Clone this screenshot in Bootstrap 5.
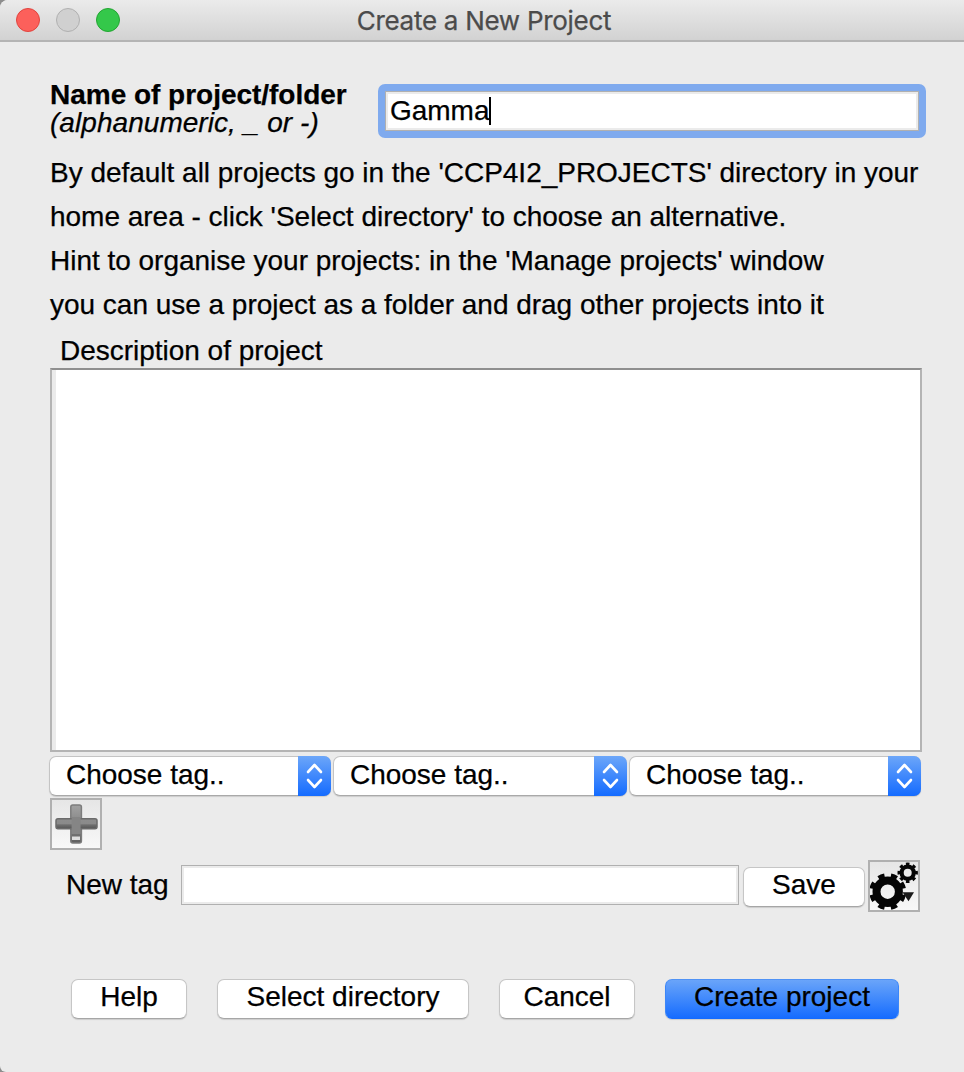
<!DOCTYPE html>
<html lang="en">
<head>
<meta charset="utf-8">
<title>Create a New Project</title>
<link href="https://cdn.jsdelivr.net/npm/bootstrap@5.3.0/dist/css/bootstrap.min.css" rel="stylesheet">
<style>
body{background:#8d8d8d;font:28px/28px "Liberation Sans",Arial,sans-serif;color:#000;height:1072px;overflow:hidden;letter-spacing:-.02px;-webkit-text-stroke:.25px}
.win{width:964px;height:1072px;background:#ebebeb;border-radius:8px 0 0 6px;overflow:hidden}
.titlebar{height:42px;background:linear-gradient(#ebebeb,#d2d2d2);border-bottom:2px solid #b4b4b4;display:grid;grid-template-columns:200px 1fr 196px}
.lights{padding-left:16px;gap:16px}
.light{width:24px;height:24px;border-radius:50%;border:1px solid}
.l-red{background:#fc605b;border-color:#e0443e}.l-grey{background:#d0d0d0;border-color:#b0b0b0}.l-green{background:#34c84a;border-color:#23a532}
.title-text{font:26px/38px Inter,sans-serif;color:#4b4b4b;letter-spacing:-.28px;white-space:nowrap;padding-top:2px}
.content{padding:38px 38px 0 50px}
.name-label{width:328px;white-space:nowrap;padding-top:1px}
.name-label i{letter-spacing:.05px}
.focus-box{margin-top:4px;height:54px;background:#7faaee;border-radius:7px;padding:7px}
.field{background:#fff;border:1px solid #b0b0b0;box-shadow:inset 0 0 0 2px #ebebeb;height:40px}
.field-name{padding:5px 0 0 4px;line-height:28px}
.caret{width:2px;height:28px;background:#000}
.intro{margin-top:12px;line-height:44px;white-space:nowrap}
.desc-label{height:41px;padding:6px 0 0 10px;line-height:36px}
.desc{width:872px;height:384px;background:#fff;border:2px solid #b4b4b4;border-top-color:#8f8f8f;box-shadow:inset 4px 0 0 #ebebeb}
.tags{margin:4px 0 0 -1px;gap:2px}
.combo{height:40px;background:#fff;border:1px solid #c4c4c4;border-bottom-color:#a9a9a9;border-radius:7px;box-shadow:0 1px 1px #0002;padding-left:16px;line-height:36px}
.combo svg{width:33px;height:40px;margin:-1px -1px 0 0;border-radius:0 7px 7px 0;background:linear-gradient(#6ca6f9,#146bff)}
.tool{width:52px;height:52px;border:2px solid #b0b0b0;background:linear-gradient(#e6e6e6,#f8f8f8)}
.tool svg{display:block;margin:-2px}
.newtag{margin-top:10px;height:52px;padding-left:16px}
.mac{height:40px;padding:0 0 4px;background:#fff;border:1px solid #c6c6c6;border-bottom-color:#a6a6a6;border-radius:7px;box-shadow:0 1px 1px #0002;font-size:28px;line-height:34px;color:#000}
.mac-primary{background:linear-gradient(#6ca6f9,#146bff) border-box;border-color:#4f92f5 #3c86f8 #146bff}
.actions{margin-top:67px;padding-left:21px;gap:30px}
</style>
<script src="https://cdn.jsdelivr.net/npm/bootstrap@5.3.0/dist/js/bootstrap.bundle.min.js"></script>
</head>
<body>
<div class="win">
  <header class="titlebar">
    <div class="lights d-flex align-items-center"><span class="light l-red"></span><span class="light l-grey"></span><span class="light l-green"></span></div>
    <div class="title-text text-center">Create a New Project</div>
  </header>
  <main class="content">
    <div class="d-flex">
      <div class="name-label"><b>Name of project/folder</b><br><i>(alphanumeric, _ or -)</i></div>
      <div class="focus-box flex-grow-1"><div class="field field-name d-flex"><span>Gamma</span><span class="caret"></span></div></div>
    </div>
    <div class="intro" style="padding-top:1px">By default all projects go in the 'CCP4I2_PROJECTS' directory in your<br>home area - click 'Select directory' to choose an alternative.<br>Hint to organise your projects: in the 'Manage projects' window<br>you can use a project as a folder and drag other projects into it</div>
    <div class="desc-label">Description of project</div>
    <div class="desc"></div>
    <div class="tags d-flex">
      <div class="combo d-flex justify-content-between" style="width:282px"><span>Choose tag..</span><svg viewBox="0 0 33 40"><path d="M10 16l6.500-7 6.500 7M10 24l6.500 7 6.500-7" fill="none" stroke="#fff" stroke-width="2.600" stroke-linecap="round" stroke-linejoin="round"/></svg></div>
      <div class="combo d-flex justify-content-between" style="width:294px"><span>Choose tag..</span><svg viewBox="0 0 33 40"><path d="M10 16l6.500-7 6.500 7M10 24l6.500 7 6.500-7" fill="none" stroke="#fff" stroke-width="2.600" stroke-linecap="round" stroke-linejoin="round"/></svg></div>
      <div class="combo d-flex justify-content-between" style="width:292px"><span>Choose tag..</span><svg viewBox="0 0 33 40"><path d="M10 16l6.500-7 6.500 7M10 24l6.500 7 6.500-7" fill="none" stroke="#fff" stroke-width="2.600" stroke-linecap="round" stroke-linejoin="round"/></svg></div>
    </div>
    <div class="tool" style="margin-top:2px">
      <svg width="52" height="52" viewBox="0 0 52 52">
        <defs><linearGradient id="g" x1="0" y1="0" x2="0" y2="1"><stop offset="0" stop-color="#a2a2a2"/><stop offset=".5" stop-color="#858585"/><stop offset="1" stop-color="#5e5e5e"/></linearGradient>
        <linearGradient id="h" x1="0" y1="0" x2="0" y2="1"><stop offset="0" stop-color="#8c8c8c"/><stop offset=".5" stop-color="#8a8a8a"/><stop offset=".6" stop-color="#707070"/><stop offset="1" stop-color="#555"/></linearGradient></defs>
        <rect x="20.800" y="7" width="10.600" height="38" rx="2" fill="url(#g)" stroke="#7c7c7c" stroke-width="1.500"/>
        <rect x="6" y="20.800" width="41" height="10" rx="2" fill="url(#h)" stroke="#6b6b6b" stroke-width="1.500"/>
        <rect x="21.600" y="19" width="9" height="17" fill="#858585"/>
        <rect x="22" y="38.500" width="8" height="3.500" fill="#ddd"/>
      </svg>
    </div>
    <div class="newtag d-flex">
      <span style="width:115px;line-height:50px">New tag</span>
      <div class="field" style="width:558px;margin-top:5px"></div>
      <button class="btn mac" style="width:122px;margin:7px 3px 0 4px">Save</button>
      <div class="tool">
        <svg width="52" height="52" viewBox="0 0 52 52"><clipPath id="c"><path d="M2 2h48v48H2z"/></clipPath><g fill="none" stroke="#050505" clip-path="url(#c)">
          <circle cx="19.700" cy="31.700" r="11.200" stroke-width="8"/>
          <circle cx="19.700" cy="31.700" r="16" stroke-width="5" pathLength="16" stroke-dasharray="1 1" transform="rotate(11.250 19.700 31.700)"/>
          <circle cx="39.700" cy="12.700" r="6.100" stroke-width="4.200"/>
          <circle cx="39.700" cy="12.700" r="8.700" stroke-width="3" pathLength="16" stroke-dasharray="1 1" transform="rotate(-11.250 39.700 12.700)"/>
        </g><path d="M34.500 32.300H46L40.500 41.300z" fill="#1a1a1a"/></svg>
      </div>
    </div>
    <div class="actions d-flex">
      <button class="btn mac" style="width:116px">Help</button>
      <button class="btn mac" style="width:252px">Select directory</button>
      <button class="btn mac" style="width:136px">Cancel</button>
      <button class="btn mac mac-primary" style="width:234px">Create project</button>
    </div>
  </main>
</div>
</body>
</html>
